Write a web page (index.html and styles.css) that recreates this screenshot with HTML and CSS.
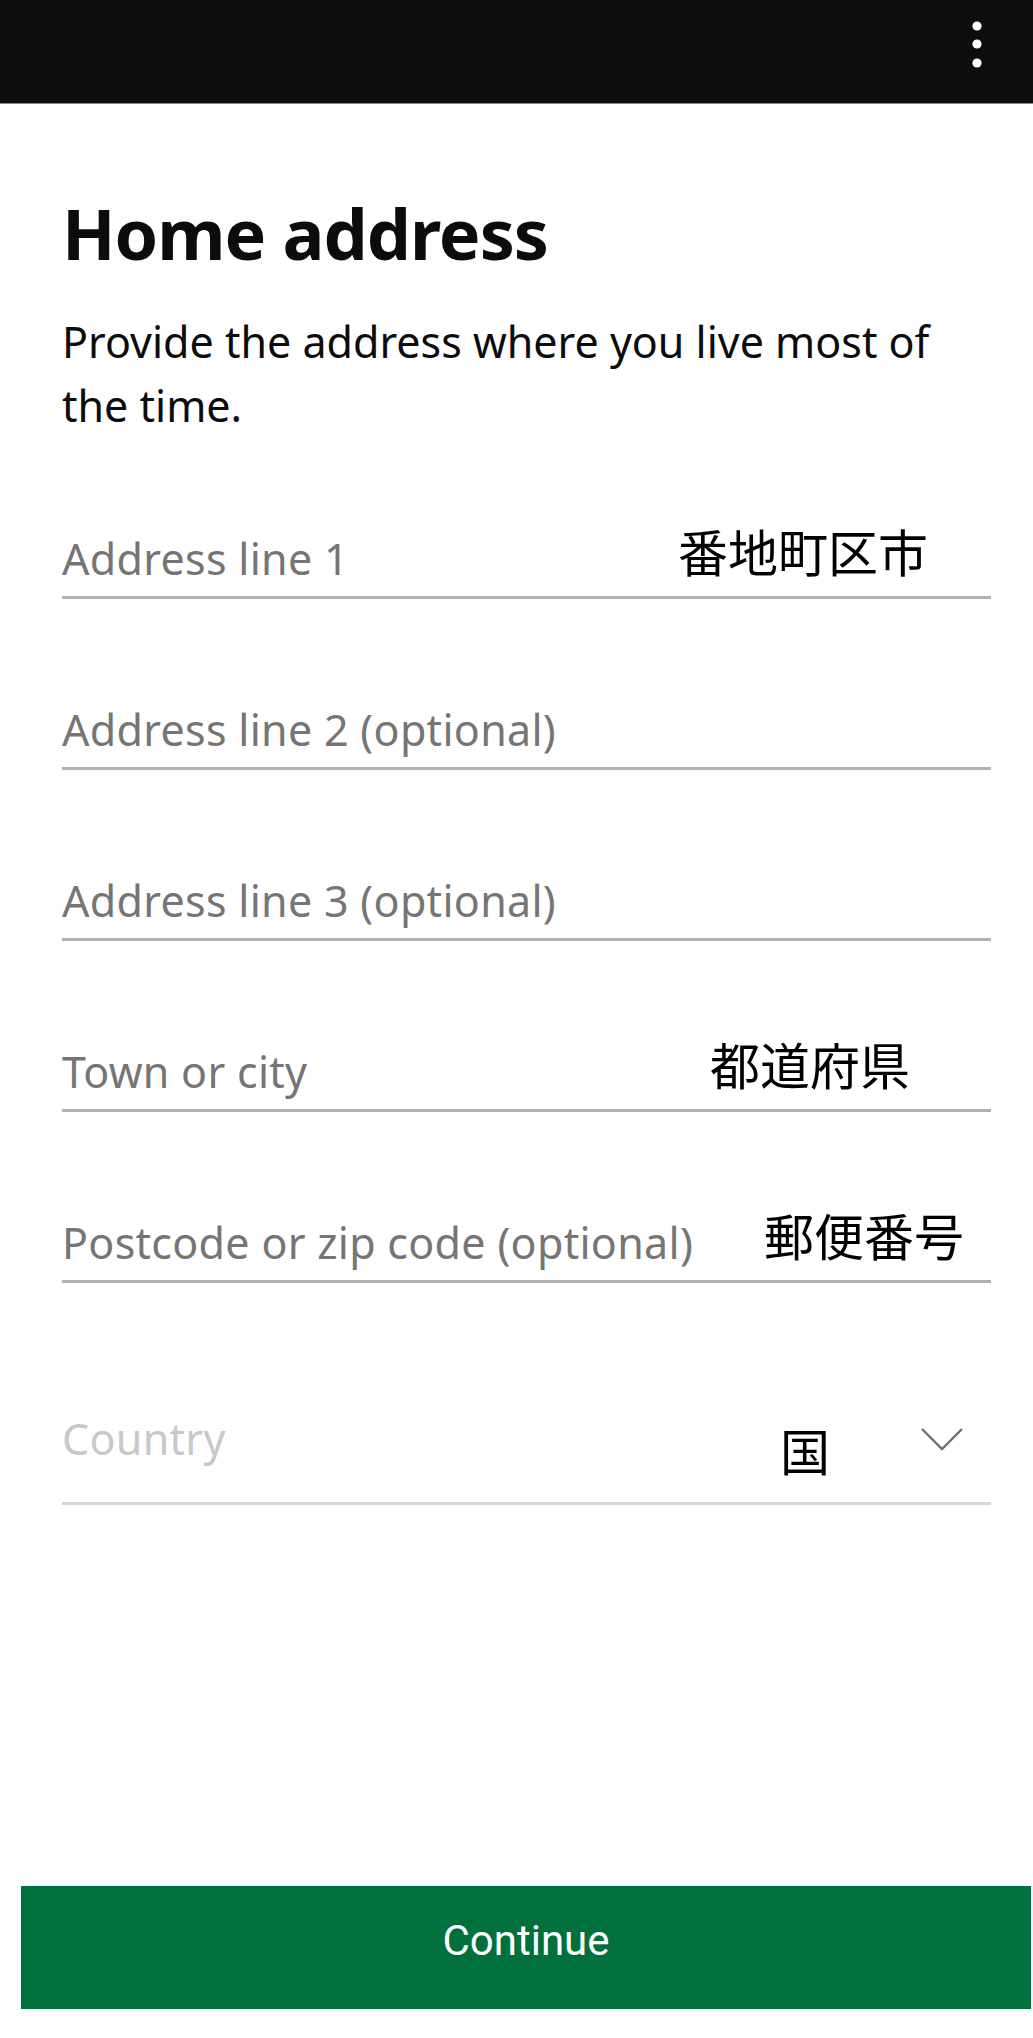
FILE: index.html
```html
<!DOCTYPE html>
<html lang="en">
<head>
    <meta charset="UTF-8">
    <title>Home address</title>
    <link rel="stylesheet" href="styles.css">
</head>
<body>
    <div id="topbar">
        <div id="menu">
            <svg width="14" height="52" viewBox="0 0 14 52">
                <circle cx="7" cy="7" r="4.6" fill="#fff"/>
                <circle cx="7" cy="25" r="4.6" fill="#fff"/>
                <circle cx="7" cy="44" r="4.6" fill="#fff"/>
            </svg>
        </div>
    </div>

    <div id="content">
        <h1 class="title">Home address</h1>
        <p class="intro">Provide the address where you live most of the time.</p>

        <div class="field first">
            <span class="label">Address line 1</span>
            <span class="hint hint-line1">番地町区市</span>
        </div>
        <div class="field">
            <span class="label">Address line 2 (optional)</span>
        </div>
        <div class="field">
            <span class="label">Address line 3 (optional)</span>
        </div>
        <div class="field">
            <span class="label">Town or city</span>
            <span class="hint hint-town">都道府県</span>
        </div>
        <div class="field">
            <span class="label">Postcode or zip code (optional)</span>
            <span class="hint hint-post">郵便番号</span>
        </div>

        <div class="select">
            <span class="label label-empty">Country</span>
            <span class="hint hint-country">国</span>
            <svg class="chevron" width="44" height="26" viewBox="0 0 44 26">
                <polyline points="2,3 22,23 42,3" fill="none" stroke="#6f6f6f" stroke-width="2.4"/>
            </svg>
        </div>
    </div>

    <div id="footer">
        <div class="btn">Continue</div>
    </div>
</body>
</html>
```

FILE: styles.css
```css
*{margin:0;padding:0;}
body{
    background:#fff;
    font-family:"Noto Sans", "Noto Sans CJK JP", sans-serif;
    color:#0b0c0c;
}
#topbar{
    height:103px;
    background:#0d0d0d;
    border-bottom:1px solid #8a8a8a;
    display:flex;
    justify-content:flex-end;
    align-items:flex-start;
}
#menu{
    padding:19px 49px 0 0;
}
#menu svg{display:block;}

#content{
    padding:0 42px 0 62px;
}
.title{
    font-size:70px;
    font-weight:bold;
    line-height:80px;
    padding-top:89px;
    letter-spacing:-1px;
}
.intro{
    font-size:43px;
    line-height:64px;
    margin-top:37px;
    padding-right:30px;
}

.field{
    height:171px;
    box-sizing:border-box;
    border-bottom:3px solid #b1b1b1;
    display:flex;
    align-items:flex-end;
    padding-bottom:10px;
}
.field.first{height:161px;}
.label{
    flex:none;
    font-family:"Noto Sans", sans-serif;
    font-size:43px;
    line-height:54px;
    letter-spacing:0.3px;
    color:#757575;
}
.hint{
    font-family:"Noto Sans CJK JP", sans-serif;
    font-size:50px;
    line-height:60px;
    color:#000;
    margin-left:auto;
    position:relative;
    top:-6px;
}
.hint-line1{margin-right:63px;}
.hint-town{margin-right:81px;}
.hint-post{margin-right:27px;}

.select{
    height:222px;
    box-sizing:border-box;
    border-bottom:3px solid #d6d6d6;
    display:flex;
    align-items:center;
    padding-top:125px;
    padding-bottom:33px;
}
.label-empty{color:#c8c8c8;}
.hint-country{
    top:10px;
}
.chevron{
    margin-left:90px;
    margin-right:27px;
}

#footer{
    margin-top:381px;
    padding:0 2px 0 21px;
}
.btn{
    height:123px;
    box-sizing:border-box;
    padding-bottom:14px;
    background:#00703c;
    color:#fff;
    font-family:Roboto, sans-serif;
    font-size:42px;
    display:flex;
    align-items:center;
    justify-content:center;
}
```
